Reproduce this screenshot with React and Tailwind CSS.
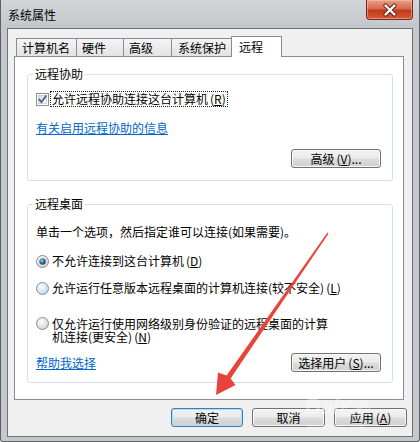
import React from 'react';

const font = "font-['Noto_Sans_CJK_SC','Noto_Sans',sans-serif]";

const btnBg = 'bg-[linear-gradient(#f2f2f2_0%,#ebebeb_48%,#dddddd_52%,#cfcfcf_100%)]';

const Key = ({ k }) => (
    <span className="ml-[2px]">(<span className="underline">{k}</span>)</span>
);

const WinButton = ({ children, primary, className = '' }) => (
    <div
        className={`flex items-center justify-center h-[19px] rounded-[3px] border text-[12px] leading-[12px] ${btnBg} ${primary ? 'border-[#3c7fb1] shadow-[inset_0_0_0_1px_#a9dcf6]' : 'border-[#707070] shadow-[inset_0_0_0_1px_#f8f8f8]'} ${className}`}
    >
        {children}
    </div>
);

const Checkbox = () => (
    <svg width="13" height="13" viewBox="0 0 13 13" className="shrink-0">
        <defs>
            <linearGradient id="cbg" x1="0" y1="0" x2="1" y2="1">
                <stop offset="0" stopColor="#d4d6d9" />
                <stop offset="1" stopColor="#fbfbfb" />
            </linearGradient>
        </defs>
        <rect x="0.5" y="0.5" width="12" height="12" fill="#fff" stroke="#8e8f8f" />
        <rect x="2.5" y="2.5" width="8" height="8" fill="url(#cbg)" stroke="#b8bcc1" strokeWidth="0.6" />
        <path d="M3.2 6.4 L5.4 9 L10 3" fill="none" stroke="#4a5f97" strokeWidth="1.8" strokeLinecap="round" />
    </svg>
);

const Radio = ({ checked, tint }) => (
    <svg width="13" height="13" viewBox="0 0 13 13" className="shrink-0">
        <defs>
            <radialGradient id={`rg${checked ? 1 : 0}${tint ? 1 : 0}`} cx="0.4" cy="0.35" r="0.7">
                <stop offset="0" stopColor="#ffffff" />
                <stop offset="1" stopColor={tint ? '#b7d6ea' : '#cfd0d2'} />
            </radialGradient>
            <radialGradient id="dot" cx="0.4" cy="0.35" r="0.7">
                <stop offset="0" stopColor="#8fd3e8" />
                <stop offset="0.6" stopColor="#2a6a8c" />
                <stop offset="1" stopColor="#123d55" />
            </radialGradient>
        </defs>
        <circle cx="6.5" cy="6.5" r="6" fill={`url(#rg${checked ? 1 : 0}${tint ? 1 : 0})`} stroke="#8b8c8e" />
        {checked && <circle cx="6.5" cy="6.5" r="3.2" fill="url(#dot)" />}
    </svg>
);

const Tab = ({ label, width, active, pl = 'pl-[5px]' }) => (
    <div
        className={`-ml-px first:ml-0 border-l border-t border-r border-[#898c95] flex items-center ${pl} ${active ? 'relative z-10 h-[21px] -mb-px bg-white' : 'h-[18px] bg-[linear-gradient(#f4f4f4,#e3e3e3)]'}`}
        style={{ width }}
    >
        {label}
    </div>
);

const Group = ({ title, height, className = '', children }) => (
    <div className={`relative ml-[12px] w-[366px] rounded-[3px] border border-[#d5dfe5] ${className}`} style={{ height }}>
        <span className="absolute -top-[9px] left-[5px] px-[2px] bg-white leading-[16px]">{title}</span>
        {children}
    </div>
);

const App = () => {
    return (
        <div className={`relative w-[420px] h-[442px] overflow-hidden flex flex-col bg-[#c5c9cd] border-x border-b border-[#5d6166] rounded-b-[3px] text-[12px] text-black ${font}`}>
            {/* title bar */}
            <div className="h-[28px] flex items-start justify-between bg-[linear-gradient(#d3d6d9,#c3c7cb)]">
                <div className="ml-[7px] mt-[7px] leading-[16px]">系统属性</div>
                <div className="mr-[6px] w-[47px] h-[20px] rounded-b-[4px] border border-t-0 border-[#6e2a1c] bg-[linear-gradient(#eba08c_0%,#d66a4e_45%,#c2391d_55%,#d65a36_100%)] shadow-[inset_0_0_0_1px_rgba(255,200,180,0.5)] flex items-center justify-center">
                    <svg width="16" height="14" viewBox="0 0 16 14">
                        <path d="M3.5 2.5 L12.5 11.5 M12.5 2.5 L3.5 11.5" stroke="#5a2016" strokeWidth="4.2" strokeLinecap="round" />
                        <path d="M3.5 2.5 L12.5 11.5 M12.5 2.5 L3.5 11.5" stroke="#ffffff" strokeWidth="2.4" strokeLinecap="round" />
                    </svg>
                </div>
            </div>

            {/* client area */}
            <div className="flex-1 mx-[6px] mb-[4px] bg-[#f0f0f0] border border-[#6f7378] flex flex-col">
                <div className="flex items-end pt-[7px] pl-[8px]">
                    <Tab label="计算机名" width={61} />
                    <Tab label="硬件" width={48} />
                    <Tab label="高级" width={49} />
                    <Tab label="系统保护" width={61} pl="pl-[6px]" />
                    <Tab label="远程" width={51} active pl="pl-[7px]" />
                </div>

                <div className="ml-[6px] w-[390px] h-[344px] bg-white border border-[#898c95] flex flex-col">
                    <Group title="远程协助" height={107} className="mt-[17px]">
                        <div className="flex items-center h-[16px] mt-[16px] pl-[8px]">
                            <Checkbox />
                            <span className="ml-[1px] px-[1px] border border-dotted border-[#222] leading-[14px]">
                                允许远程协助连接这台计算机<Key k="R" />
                            </span>
                        </div>
                        <div className="mt-[13px] pl-[8px] h-[16px] leading-[16px] text-[#0066cc] underline">有关启用远程协助的信息</div>
                        <div className="mt-[13px] flex justify-end pr-[11px]">
                            <WinButton className="w-[90px]">高级<Key k="V" />...</WinButton>
                        </div>
                    </Group>

                    <Group title="远程桌面" height={179} className="mt-[23px]">
                        <div className="mt-[19px] pl-[8px] h-[16px] leading-[16px]">单击一个选项，然后指定谁可以连接(如果需要)。</div>
                        <div className="mt-[13px] pl-[8px] h-[16px] flex items-center gap-[3px]">
                            <Radio checked />
                            <span className="leading-[16px]">不允许连接到这台计算机<Key k="D" /></span>
                        </div>
                        <div className="mt-[11px] pl-[8px] h-[16px] flex items-center gap-[3px]">
                            <Radio tint />
                            <span className="leading-[16px]">允许运行任意版本远程桌面的计算机连接(较不安全)<Key k="L" /></span>
                        </div>
                        <div className="mt-[21px] pl-[8px] flex items-start gap-[3px]">
                            <Radio />
                            <span className="leading-[13px]">
                                仅允许运行使用网络级别身份验证的远程桌面的计算<br />机连接(更安全)<Key k="N" />
                            </span>
                        </div>
                        <div className="mt-[10px] pl-[8px] pr-[11px] flex items-center justify-between">
                            <span className="text-[#0066cc] underline leading-[16px]">帮助我选择</span>
                            <WinButton className="w-[90px]">选择用户<Key k="S" />...</WinButton>
                        </div>
                    </Group>
                </div>

                <div className="mt-[8px] flex justify-end gap-[9px] pr-[5px]">
                    <WinButton primary className="w-[72px]">确定</WinButton>
                    <WinButton className="w-[73px]">取消</WinButton>
                    <WinButton className="w-[73px]">应用<Key k="A" /></WinButton>
                </div>
            </div>

            {/* watermark */}
            <div className="absolute left-[304px] top-[396px] pointer-events-none text-[22px] font-bold italic text-white/40 leading-none font-['Liberation_Sans',sans-serif]">
                Bai<span className="text-[16px] not-italic font-['Noto_Sans_CJK_SC',sans-serif]">经验</span>
            </div>
            <div className="absolute left-[306px] top-[423px] pointer-events-none text-[7px] text-white/50 leading-none font-['Liberation_Sans',sans-serif]">
                jingyan.baidu.com
            </div>

            {/* red arrow */}
            <svg className="absolute inset-0 pointer-events-none" width="420" height="442" viewBox="0 0 420 442">
                <polygon
                    points="327.6,233.4 326.4,232.6 225.6,375.4 217,372.5 215,395 234.5,385 229.6,378.6"
                    fill="#e8443c"
                />
            </svg>
        </div>
    );
};

export default App;
